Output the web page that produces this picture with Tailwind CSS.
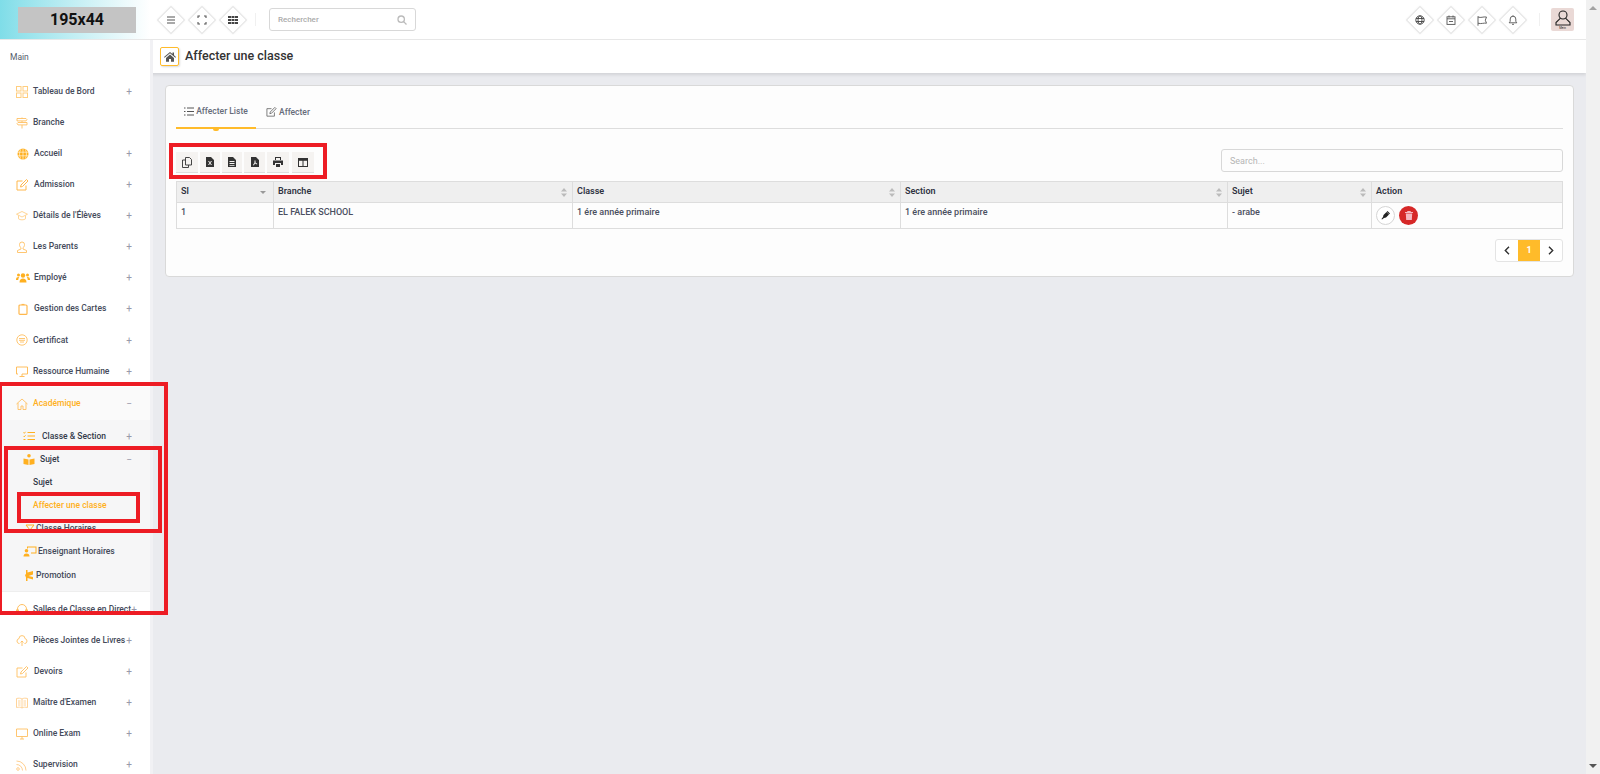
<!DOCTYPE html>
<html lang="fr">
<head>
    <meta charset="UTF-8">
    <title>Affecter une classe</title>
    <script src="https://cdn.jsdelivr.net/npm/@tailwindcss/browser@4"></script>
</head>
<body class="h-screen overflow-hidden bg-[#eaebef] font-['Roboto',sans-serif] text-[#3a3f51]">
<div class="flex h-[774px] relative">
    <div class="flex-1 flex flex-col min-w-0">
        <!-- Header -->
        <header class="h-10 flex items-center bg-white border-b border-[#e8e8e8] shrink-0">
            <div class="w-[150px] h-full flex items-center pl-[18px] bg-gradient-to-r from-[#7fdde8] to-white shrink-0">
                <div class="w-[118px] h-[26px] bg-[#c4c4c4] flex items-center justify-center text-[16px] font-bold text-[#111]">195x44</div>
            </div>
            <div class="flex items-center gap-[11px] ml-[11px]">
                <div class="w-5 h-5 rotate-45 border border-[#e4e4e4] bg-white shadow-[0_0_2px_rgba(0,0,0,0.08)] flex items-center justify-center"><svg class="-rotate-45 w-[10px] h-[10px] text-[#555]" viewBox="0 0 10 10" fill="none" stroke="currentColor" stroke-width="1.1"><path d="M1 2h8M1 5h8M1 8h8"/></svg></div>
                <div class="w-5 h-5 rotate-45 border border-[#e4e4e4] bg-white shadow-[0_0_2px_rgba(0,0,0,0.08)] flex items-center justify-center"><svg class="-rotate-45 w-[10px] h-[10px] text-[#555]" viewBox="0 0 10 10" fill="none" stroke="currentColor" stroke-width="1.1"><path d="M1 3V1h2M7 1h2v2M9 7v2H7M3 9H1V7"/></svg></div>
                <div class="w-5 h-5 rotate-45 border border-[#e4e4e4] bg-white shadow-[0_0_2px_rgba(0,0,0,0.08)] flex items-center justify-center"><svg class="-rotate-45 w-[10px] h-[10px] text-[#444]" viewBox="0 0 10 10" fill="currentColor"><path d="M0 1h3v2H0zM3.500 1h3v2h-3zM7 1h3v2H7zM0 4h3v2H0zM3.500 4h3v2h-3zM7 4h3v2H7zM0 7h3v2H0zM3.500 7h3v2h-3zM7 7h3v2H7z"/></svg></div>
            </div>
            <div class="w-px h-[13px] bg-[#f0f0f0] ml-[12px]"></div>
            <div class="ml-[13px] w-[147px] h-[23px] border border-[#d8d8d8] rounded-[3px] flex items-center justify-between px-2 text-[8px] font-medium text-[#aaa]">
                <span>Rechercher</span>
                <svg class="w-[10px] h-[10px] text-[#bbb]" viewBox="0 0 10 10" fill="none" stroke="currentColor" stroke-width="1.3"><circle cx="4.200" cy="4.200" r="3.200"/><path d="M6.600 6.600 9.500 9.500"/></svg>
            </div>
            <div class="ml-auto flex items-center gap-[11px]">
                <div class="w-5 h-5 rotate-45 border border-[#e4e4e4] bg-white shadow-[0_0_2px_rgba(0,0,0,0.08)] flex items-center justify-center"><svg class="-rotate-45 w-[10px] h-[10px] text-[#444]" viewBox="0 0 10 10" fill="none" stroke="currentColor" stroke-width="0.9"><circle cx="5" cy="5" r="4.200"/><ellipse cx="5" cy="5" rx="2" ry="4.200"/><path d="M1 3.500h8M1 6.500h8"/></svg></div>
                <div class="w-5 h-5 rotate-45 border border-[#e4e4e4] bg-white shadow-[0_0_2px_rgba(0,0,0,0.08)] flex items-center justify-center"><svg class="-rotate-45 w-[10px] h-[10px] text-[#555]" viewBox="0 0 10 10" fill="none" stroke="currentColor" stroke-width="0.9"><rect x="1" y="1.800" width="8" height="7.600"/><path d="M1 3.800h8M3 .5v2M7 .5v2M3 6.500h4"/></svg></div>
                <div class="w-5 h-5 rotate-45 border border-[#e4e4e4] bg-white shadow-[0_0_2px_rgba(0,0,0,0.08)] flex items-center justify-center"><svg class="-rotate-45 w-[11px] h-[11px] text-[#555]" viewBox="0 0 11 11" fill="none" stroke="currentColor" stroke-width="0.9"><path d="M1.500 1v9.500M1.500 1.800c3 1.200 5-.5 8.500 0L8.800 5 10 8c-3-.5-5 1-8.500 0"/></svg></div>
                <div class="w-5 h-5 rotate-45 border border-[#e4e4e4] bg-white shadow-[0_0_2px_rgba(0,0,0,0.08)] flex items-center justify-center"><svg class="-rotate-45 w-[10px] h-[10px] text-[#555]" viewBox="0 0 10 10" fill="none" stroke="currentColor" stroke-width="0.9"><path d="M1.200 7.800h7.600L7.800 6.300V4a2.800 2.800 0 0 0-5.600 0v2.300zM4 9.300h2M5 .3v1"/></svg></div>
            </div>
            <div class="w-px h-[13px] bg-[#f0f0f0] ml-[16px]"></div>
            <div class="ml-[11px] mr-[12px] w-[23px] h-[23px] bg-[#ead9d6] rounded-[2px] flex flex-col items-center justify-center">
                <svg class="w-[18px] h-[16px]" viewBox="0 0 18 16" fill="none" stroke="#222" stroke-width="1.100"><circle cx="9" cy="5" r="4"/><path d="M6.500 8.200 2 12.500V15h14v-2.500l-4.500-4.300"/></svg>
                <span class="text-[3px] leading-[4px] text-[#222]">Mein</span>
            </div>
        </header>

        <div class="flex flex-1 min-h-0">
            <!-- Sidebar -->
            <aside class="w-[150px] shrink-0 bg-white shadow-[3px_0_0_#f1f1f4] overflow-hidden text-[8.5px] font-medium text-[#444a5a] whitespace-nowrap z-10">
                <p class="pl-[10px] pt-[11px] h-[37px] text-[8.5px] font-normal text-[#555c6c]">Main</p>
                <ul class="-mt-[1px]">
                    <li class="h-[31px] flex items-center pl-4 pr-[18px]"><svg class="shrink-0 w-[12px] h-[12px] mr-[5px] text-[#ffce80]" viewBox="0 0 12 12" fill="none" stroke="currentColor"><rect x=".5" y=".5" width="4.500" height="4.500"/><rect x="7" y=".5" width="4.500" height="4.500"/><rect x=".5" y="7" width="4.500" height="4.500"/><rect x="7" y="7" width="4.500" height="4.500"/></svg><span>Tableau de Bord</span><span class="ml-auto text-[10px] font-normal text-[#99a]">+</span></li>
                    <li class="h-[31px] flex items-center pl-4 pr-[18px]"><svg class="shrink-0 w-[12px] h-[12px] mr-[5px] text-[#ffc061]" viewBox="0 0 12 12" fill="none" stroke="currentColor" stroke-width=".9"><path d="M1 1.500h9l1 1.200-1 1.200H1zM11 5.500H2L1 6.700l1 1.200h9zM6 .5v1M6 4v1.500M6 8v3.500"/></svg><span>Branche</span></li>
                    <li class="h-[31px] flex items-center pl-[17px] pr-[18px]"><svg class="shrink-0 w-[12px] h-[12px] mr-[5px] text-[#ffb020]" viewBox="0 0 12 12" fill="currentColor"><circle cx="6" cy="6" r="5.500"/><path d="M.5 4.200h11M.5 7.800h11M6 .5v11M3.600 1.500c-1.400 3-1.400 6 0 9M8.400 1.500c1.400 3 1.400 6 0 9" stroke="#fff" stroke-width=".6" fill="none"/></svg><span>Accueil</span><span class="ml-auto text-[10px] font-normal text-[#99a]">+</span></li>
                    <li class="h-[31px] flex items-center pl-4 pr-[18px]"><svg class="shrink-0 w-[13px] h-[12px] mr-[5px] text-[#ffb84d]" viewBox="0 0 13 12" fill="none" stroke="currentColor"><path d="M10 6.500v4.500H1V2h5.500M5 6l-.5 2 2-.5L12 2 10.500.5z"/></svg><span>Admission</span><span class="ml-auto text-[10px] font-normal text-[#99a]">+</span></li>
                    <li class="h-[31px] flex items-center pl-4 pr-[18px]"><svg class="shrink-0 w-[12px] h-[12px] mr-[5px] text-[#ffd08a]" viewBox="0 0 12 12" fill="none" stroke="currentColor" stroke-width=".9"><path d="M6 1.500.5 4.200 6 7l5.500-2.800zM2.500 5.500v3.300C4 10.200 8 10.200 9.500 8.800V5.500"/></svg><span>Détails de l'Élèves</span><span class="ml-auto text-[10px] font-normal text-[#99a]">+</span></li>
                    <li class="h-[31px] flex items-center pl-4 pr-[18px]"><svg class="shrink-0 w-[12px] h-[12px] mr-[5px] text-[#ffc061]" viewBox="0 0 12 12" fill="none" stroke="currentColor" stroke-width=".9"><path d="M3.500 3.500a2.500 2.500 0 0 1 5 0c0 1.500-.5 2.500-1.500 3.200V8l3.500 1.500v2h-9v-2L5 8V6.700C4 6 3.500 5 3.500 3.500z"/></svg><span>Les Parents</span><span class="ml-auto text-[10px] font-normal text-[#99a]">+</span></li>
                    <li class="h-[31px] flex items-center pl-4 pr-[18px]"><svg class="shrink-0 w-[14px] h-[11px] mr-[4px] text-[#ffb020]" viewBox="0 0 14 11" fill="currentColor"><circle cx="7" cy="3.500" r="2.200"/><circle cx="2.500" cy="3" r="1.500"/><circle cx="11.500" cy="3" r="1.500"/><path d="M3.500 10.500C3.500 7.500 5 6.500 7 6.500s3.500 1 3.500 4zM0 7.500C0 5.800 1 5 2.500 5l.8.3C2.500 6 2.300 7 2.300 8H0zM14 7.500C14 5.800 13 5 11.500 5l-.8.3c.8.7 1 1.700 1 2.700H14z"/></svg><span>Employé</span><span class="ml-auto text-[10px] font-normal text-[#99a]">+</span></li>
                    <li class="h-[31px] flex items-center pl-[18px] pr-[18px]"><svg class="shrink-0 w-[10px] h-[12px] mr-[6px] text-[#ffb84d]" viewBox="0 0 10 12" fill="none" stroke="currentColor" stroke-width="1.200"><rect x="1" y="2" width="8" height="9.400" rx="1"/><path d="M3.500 1.500h3"/></svg><span>Gestion des Cartes</span><span class="ml-auto text-[10px] font-normal text-[#99a]">+</span></li>
                    <li class="h-[32px] flex items-center pl-4 pr-[18px]"><svg class="shrink-0 w-[12px] h-[12px] mr-[5px] text-[#ffc061]" viewBox="0 0 12 12" fill="none" stroke="currentColor" stroke-width=".9"><circle cx="6" cy="6" r="5.200"/><path d="M3 4.500h6M3 6.300h6M4 8h4"/></svg><span>Certificat</span><span class="ml-auto text-[10px] font-normal text-[#99a]">+</span></li>
                    <li class="h-[31px] flex items-center pl-4 pr-[18px]"><svg class="shrink-0 w-[12px] h-[11px] mr-[5px] text-[#ffb84d]" viewBox="0 0 12 11" fill="none" stroke="currentColor" stroke-width=".9"><path d="M2 8H.5V1h11v7H6M3.500 10.500h5M6 8v2"/></svg><span>Ressource Humaine</span><span class="ml-auto text-[10px] font-normal text-[#99a]">+</span></li>
                </ul>
                <!-- Académique -->
                <div class="bg-[#f6f6f7] h-[205px] border-b border-[#eee]">
                    <div class="h-[33px] bg-[#fafafa] flex items-center pl-4 pr-[18px] text-[#ffb020]"><svg class="shrink-0 w-[12px] h-[12px] mr-[5px] text-[#ffc061]" viewBox="0 0 12 12" fill="none" stroke="currentColor" stroke-width=".9"><path d="M.5 6 6 1l5.500 5M2 5v6.500h3V8h2v3.500h3V5"/></svg><span>Académique</span><span class="ml-auto text-[10px] font-normal text-[#99a]">−</span></div>
                    <div class="h-[28px] pt-[4px] flex items-center pl-[23px] pr-[18px] text-[#333a4a]"><svg class="shrink-0 w-[12px] h-[10px] mr-[7px] text-[#ffb020]" viewBox="0 0 12 10" fill="none" stroke="currentColor" stroke-width="1"><path d="M4.500 1.500H12M4.500 5H12M4.500 8.500H12M.5 1.500l.8.8L2.500.8M.5 5l.8.8L2.500 4.300M.5 8.500h2"/></svg><span>Classe &amp; Section</span><span class="ml-auto text-[10px] font-normal text-[#99a]">+</span></div>
                    <div class="h-[23px] flex items-center pl-[23px] pr-[18px] text-[#333a4a]"><svg class="shrink-0 w-[12px] h-[11px] mr-[5px] text-[#ffb020]" viewBox="0 0 12 11" fill="currentColor"><circle cx="6" cy="1.800" r="1.800"/><path d="M.5 4.500 5.500 5.500V11L.5 10zM11.500 4.500 6.500 5.500V11l5-1z"/></svg><span>Sujet</span><span class="ml-auto text-[10px] font-normal text-[#99a]">−</span></div>
                    <div class="h-[23px] flex items-center pl-[33px] text-[#333a4a]">Sujet</div>
                    <div class="h-[23px] flex items-center pl-[33px] text-[#ffb020]">Affecter une classe</div>
                    <div class="h-[23px] flex items-center pl-[25px] text-[#444a5a]"><svg class="shrink-0 w-[10px] h-[10px] mr-[1px] text-[#ffb020]" viewBox="0 0 10 10" fill="none" stroke="currentColor"><path d="M1 1h8L5 6zM5 6v3"/></svg><span>Classe Horaires</span></div>
                    <div class="h-[23px] flex items-center pl-[23px] text-[#444a5a]"><svg class="shrink-0 w-[14px] h-[11px] mr-[1px] text-[#ffb020]" viewBox="0 0 14 11" fill="currentColor"><circle cx="3.500" cy="4.800" r="1.800"/><path d="M.5 10.500c0-2 1-3 3-3s3 1 3 3zM4 .5h9.500v7H8V6.500h4.500v-5H5V2.500H4z"/></svg><span>Enseignant Horaires</span></div>
                    <div class="h-[24px] flex items-center pl-[25px] text-[#444a5a]"><svg class="shrink-0 w-[8px] h-[11px] mr-[3px] text-[#ffb020]" viewBox="0 0 8 11" fill="currentColor"><path d="M1 0h1.500v2.500L8 1v3.500L3.500 6 8 7v2.500L2.500 8V11H1V7.500L0 5l1-1z"/></svg><span>Promotion</span></div>
                </div>
                <ul class="pt-[1px]">
                    <li class="h-[32px] flex items-center pl-4 pr-[18px]"><svg class="shrink-0 w-[12px] h-[12px] mr-[5px] text-[#ffc061]" viewBox="0 0 12 12" fill="none" stroke="currentColor" stroke-width="1"><path d="M1.500 8V6a4.500 4.500 0 0 1 9 0v2"/><rect x=".5" y="7" width="2" height="3.500"/><rect x="9.500" y="7" width="2" height="3.500"/></svg><span>Salles de Classe en Direct</span><span class="ml-auto text-[10px] font-normal text-[#99a]">+</span></li>
                    <li class="h-[31px] flex items-center pl-4 pr-[18px]"><svg class="shrink-0 w-[12px] h-[12px] mr-[5px] text-[#ffc061]" viewBox="0 0 12 12" fill="none" stroke="currentColor" stroke-width=".9"><path d="M3.500 8.500H3A2.500 2.500 0 0 1 3 3.600a3 3 0 0 1 6 0 2.500 2.500 0 0 1 0 4.900h-.5M6 11V6M4.500 7.500 6 6l1.500 1.500"/></svg><span>Pièces Jointes de Livres</span><span class="ml-auto text-[10px] font-normal text-[#99a]">+</span></li>
                    <li class="h-[31px] flex items-center pl-4 pr-[18px]"><svg class="shrink-0 w-[13px] h-[12px] mr-[5px] text-[#ffc061]" viewBox="0 0 13 12" fill="none" stroke="currentColor" stroke-width=".9"><path d="M10 6.500v4.500H1V2h5.500M5 6l-.5 2 2-.5L12 2 10.500.5z"/></svg><span>Devoirs</span><span class="ml-auto text-[10px] font-normal text-[#99a]">+</span></li>
                    <li class="h-[31px] flex items-center pl-4 pr-[18px]"><svg class="shrink-0 w-[12px] h-[12px] mr-[5px] text-[#ffcf8f]" viewBox="0 0 12 12" fill="none" stroke="currentColor" stroke-width=".9"><path d="M.5 1.500C2.500 1 4.500 1 6 2c1.500-1 3.500-1 5.500-.5v9C9.500 10 7.500 10 6 11c-1.500-1-3.500-1-5.500-.5zM6 2v9M2 4h2.500M2 6h2.500M2 8h2.500M7.500 4H10M7.500 6H10M7.500 8H10"/></svg><span>Maître d'Examen</span><span class="ml-auto text-[10px] font-normal text-[#99a]">+</span></li>
                    <li class="h-[31px] flex items-center pl-4 pr-[18px]"><svg class="shrink-0 w-[12px] h-[12px] mr-[5px] text-[#ffc061]" viewBox="0 0 12 12" fill="none" stroke="currentColor" stroke-width=".9"><path d="M.5 1h11v7.500H.5zM4 11h4M6 8.500V11"/></svg><span>Online Exam</span><span class="ml-auto text-[10px] font-normal text-[#99a]">+</span></li>
                    <li class="h-[31px] flex items-center pl-4 pr-[18px]"><svg class="shrink-0 w-[12px] h-[12px] mr-[5px] text-[#ffcf8f]" viewBox="0 0 12 12" fill="none" stroke="currentColor"><circle cx="2" cy="10" r="1.300"/><path d="M.5 5.500A6 6 0 0 1 6.500 11.500M.5 2a9.500 9.500 0 0 1 9.500 9.500"/></svg><span>Supervision</span><span class="ml-auto text-[10px] font-normal text-[#99a]">+</span></li>
                </ul>
            </aside>

            <!-- Main -->
            <main class="flex-1 min-w-0">
                <div class="h-[33px] bg-white shadow-[0_2px_3px_rgba(0,0,0,0.1)] flex items-center pl-[10px]">
                    <div class="w-[19px] h-[19px] border border-[#ffbb2a] rounded-[2px] flex items-center justify-center shadow-[1px_1px_2px_rgba(0,0,0,0.15)]"><svg class="w-[12px] h-[11px] text-[#555]" viewBox="0 0 12 11" fill="currentColor"><path d="M6 1 0 6l.6.7L6 2.300l5.400 4.400L12 6l-2-1.700V1.500H8.500v1.500zM2 7v3.700h3V8h2v2.700h3V7L6 3.500z"/></svg></div>
                    <h1 class="ml-[6px] text-[12.500px] font-medium text-[#333]">Affecter une classe</h1>
                </div>
                <section class="ml-[15px] mr-3 mt-3 h-[192px] bg-[#fdfdfd] border border-[#d9d9d9] rounded-[4px] px-[10px]">
                    <div class="h-[43px] border-b border-[#ddd] flex text-[8.5px] font-medium text-[#666c7a]">
                        <div class="w-[80px] h-[43px] border-b-2 border-[#ffbb2a] flex items-center justify-center gap-[2px] relative pt-[10px]"><svg class="w-[10px] h-[9px] text-[#555]" viewBox="0 0 10 9" fill="none" stroke="currentColor"><path d="M3 1h7M3 4.500h7M3 8h7M0 1h1.500M0 4.500h1.500M0 8h1.500"/></svg>Affecter Liste<span class="absolute -bottom-[4px] left-[37px] w-[6px] h-[3px] bg-[#ffbb2a] rounded-b-[2px]"></span></div>
                        <div class="ml-[10px] flex items-center gap-[2px] pt-[10px]"><svg class="w-[11px] h-[10px] text-[#666]" viewBox="0 0 13 12" fill="none" stroke="currentColor"><path d="M10 6.500v4.500H1V2h5.500M5 6l-.5 2 2-.5L12 2 10.500.5z"/></svg>Affecter</div>
                    </div>
                    <div class="mt-[20px] flex items-start justify-between h-[24px]">
                        <div class="flex gap-[2px] h-[21px] mt-[3px]">
                            <div class="w-[22px] bg-[#f5f3f1] border-b border-[#ddd] flex items-center justify-center"><svg class="w-[10px] h-[11px] text-[#333]" viewBox="0 0 10 11" fill="none" stroke="currentColor" stroke-width=".9"><path d="M3.500.5h4l2 2v5.500h-6zM3.500 3H.5v7.500h6V8"/></svg></div>
                            <div class="w-[20px] bg-[#f5f3f1] border-b border-[#ddd] flex items-center justify-center"><svg class="w-[8px] h-[10px] text-[#333]" viewBox="0 0 8 10" fill="currentColor"><path d="M0 0h5l3 3v7H0zM2 4l1.500 2L2 8h1l1-1.300L5 8h1L4.500 6 6 4H5L4 5.300 3 4z" fill-rule="evenodd"/></svg></div>
                            <div class="w-[20px] bg-[#f5f3f1] border-b border-[#ddd] flex items-center justify-center"><svg class="w-[8px] h-[10px] text-[#333]" viewBox="0 0 8 10" fill="currentColor"><path d="M0 0h5l3 3v7H0zM1.500 4v1h5V4zM1.500 6v1h5V6zM1.500 8v.8h5V8z" fill-rule="evenodd"/></svg></div>
                            <div class="w-[21px] bg-[#f5f3f1] border-b border-[#ddd] flex items-center justify-center"><svg class="w-[8px] h-[10px] text-[#333]" viewBox="0 0 8 10" fill="currentColor"><path d="M0 0h5l3 3v7H0zM3.500 3.500v2L2 8l.8.5L4 6.500l2 1 .3-.8L4.500 5.500v-2z" fill-rule="evenodd"/></svg></div>
                            <div class="w-[22px] bg-[#f5f3f1] border-b border-[#ddd] flex items-center justify-center"><svg class="w-[10px] h-[10px] text-[#333]" viewBox="0 0 10 10" fill="currentColor"><path d="M2 0h6v3H7V1H3v2H2zM0 3.500h10V8H8V6H2v2H0zM3 7h4v3H3z"/></svg></div>
                            <div class="ml-[1px] w-[22px] bg-[#f5f3f1] border-b border-[#ddd] flex items-center justify-center"><svg class="w-[10px] h-[9px] text-[#333]" viewBox="0 0 10 9" fill="none" stroke="currentColor"><rect x=".5" y=".5" width="9" height="8"/><path d="M.5 1.500h9M.5 2.300h9M5 1v7.500"/></svg></div>
                        </div>
                        <input class="w-[342px] h-[23px] border border-[#d8d8d8] rounded-[3px] px-2 text-[9px] placeholder:text-[#b5b5b5]" placeholder="Search...">
                    </div>
                    <table class="mt-[8px] w-full table-fixed border-collapse border border-[#ddd] text-[9px] font-medium text-[#4a4f60]">
                        <thead>
                            <tr class="h-[21px] bg-[#efefef] text-left text-[#2f3342]">
                                <th class="w-[97px] border border-[#ddd] px-1 font-semibold"><div class="flex justify-between items-center">Sl<span class="w-0 h-0 mr-[3px] border-x-[3px] border-x-transparent border-t-[3px] border-t-[#999]"></span></div></th>
                                <th class="w-[299px] border border-[#ddd] px-1 font-semibold"><div class="flex justify-between items-center">Branche<svg class="w-[6px] h-[9px] mr-[1px] text-[#bbb]" viewBox="0 0 6 9" fill="currentColor"><path d="M3 0l3 3.500H0zM3 9 0 5.500h6z"/></svg></div></th>
                                <th class="w-[328px] border border-[#ddd] px-1 font-semibold"><div class="flex justify-between items-center">Classe<svg class="w-[6px] h-[9px] mr-[1px] text-[#bbb]" viewBox="0 0 6 9" fill="currentColor"><path d="M3 0l3 3.500H0zM3 9 0 5.500h6z"/></svg></div></th>
                                <th class="w-[327px] border border-[#ddd] px-1 font-semibold"><div class="flex justify-between items-center">Section<svg class="w-[6px] h-[9px] mr-[1px] text-[#bbb]" viewBox="0 0 6 9" fill="currentColor"><path d="M3 0l3 3.500H0zM3 9 0 5.500h6z"/></svg></div></th>
                                <th class="w-[144px] border border-[#ddd] px-1 font-semibold"><div class="flex justify-between items-center">Sujet<svg class="w-[6px] h-[9px] mr-[1px] text-[#bbb]" viewBox="0 0 6 9" fill="currentColor"><path d="M3 0l3 3.500H0zM3 9 0 5.500h6z"/></svg></div></th>
                                <th class="border border-[#ddd] px-1 font-semibold">Action</th>
                            </tr>
                        </thead>
                        <tbody>
                            <tr class="h-[26px] align-top">
                                <td class="border border-[#ddd] px-1 pt-[3px]">1</td>
                                <td class="border border-[#ddd] px-1 pt-[3px]">EL FALEK SCHOOL</td>
                                <td class="border border-[#ddd] px-1 pt-[3px]">1 ére année primaire</td>
                                <td class="border border-[#ddd] px-1 pt-[3px]">1 ére année primaire</td>
                                <td class="border border-[#ddd] px-1 pt-[3px]">- arabe</td>
                                <td class="border border-[#ddd] px-1 pt-[3px]">
                                    <div class="flex gap-[4px] pb-[3px]">
                                        <div class="w-[19px] h-[19px] rounded-full border border-[#d5d5d5] bg-white flex items-center justify-center"><svg class="w-[9px] h-[9px] text-[#222]" viewBox="0 0 9 9" fill="currentColor"><path d="M5.500 1 8 3.500 5 6.500 3 7 1 8.500.5 8 2 6l.5-2zM6.500 0 9 2.500l-.8.8L5.700.8z"/></svg></div>
                                        <div class="w-[19px] h-[19px] rounded-full bg-[#d62828] flex items-center justify-center"><svg class="w-[8px] h-[9px] text-[#f5b8c0]" viewBox="0 0 8 9" fill="currentColor"><path d="M2.500 0h3l.5 1h2v1H0V1h2zM.8 2.500h6.400L6.800 9H1.200z"/></svg></div>
                                    </div>
                                </td>
                            </tr>
                        </tbody>
                    </table>
                    <div class="mt-[10px] flex justify-end">
                        <div class="h-[23px] w-[68px] border border-[#e4e4e4] rounded-[3px] flex bg-white overflow-hidden">
                            <div class="flex-1 flex items-center justify-center"><svg class="w-[6px] h-[9px] text-[#333]" viewBox="0 0 6 9" fill="none" stroke="currentColor" stroke-width="1.400"><path d="M5 .8 1.300 4.500 5 8.200"/></svg></div>
                            <div class="w-[22px] bg-[#ffbb2a] text-white text-[9px] font-bold flex items-center justify-center">1</div>
                            <div class="flex-1 flex items-center justify-center"><svg class="w-[6px] h-[9px] text-[#333]" viewBox="0 0 6 9" fill="none" stroke="currentColor" stroke-width="1.400"><path d="M1 .8 4.700 4.500 1 8.200"/></svg></div>
                        </div>
                    </div>
                </section>
            </main>
        </div>
    </div>

    <!-- Scrollbar -->
    <div class="w-[14px] shrink-0 bg-[#f1f1f1] flex flex-col justify-between items-center py-[6px]">
        <span class="w-0 h-0 border-x-[4px] border-x-transparent border-b-[4px] border-b-[#a3a3a3]"></span>
        <span class="w-0 h-0 border-x-[4px] border-x-transparent border-t-[4px] border-t-[#555]"></span>
    </div>

    <!-- Red annotation boxes drawn over the screenshot -->
    <div class="absolute z-20 -left-[2px] top-[382px] w-[170px] h-[233px] border-[4px] border-[#ed1c24] pointer-events-none"></div>
    <div class="absolute z-20 left-[4px] top-[446px] w-[158px] h-[87px] border-[4px] border-[#ed1c24] pointer-events-none"></div>
    <div class="absolute z-20 left-[17px] top-[492px] w-[123px] h-[31px] border-[4px] border-[#ed1c24] pointer-events-none"></div>
    <div class="absolute z-20 left-[169px] top-[143px] w-[158px] h-[36px] border-[4px] border-[#ed1c24] pointer-events-none"></div>
</div>
</body>
</html>
